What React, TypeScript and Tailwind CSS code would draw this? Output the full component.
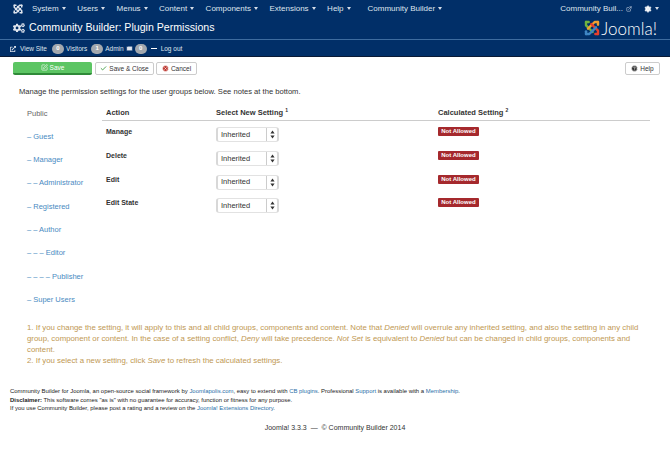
import { Check, CircleHelp, CircleX, ExternalLink, Mail, SquarePen, Settings } from "lucide-react";
import { FaCogs, FaExternalLinkAlt } from "react-icons/fa";

const menus = ["System", "Users", "Menus", "Content", "Components", "Extensions", "Help"];
const groups = [
  "– Guest",
  "– Manager",
  "– – Administrator",
  "– Registered",
  "– – Author",
  "– – – Editor",
  "– – – – Publisher",
  "– Super Users",
];
const actions = ["Manage", "Delete", "Edit", "Edit State"];

function Caret() {
  return <span className="ml-[3px] inline-block h-0 w-0 border-x-[2.5px] border-t-[3px] border-x-transparent border-t-[#d5dde8] align-middle" />;
}

// four hooked arms, same shape for the nav glyph and the coloured logo
function JoomlaMark({ size, tile }: { size: number; tile?: boolean }) {
  const colors = tile ? ["#6fb33f", "#f0a030", "#e8402a", "#3f86c4"] : ["#dfe5ee", "#dfe5ee", "#dfe5ee", "#dfe5ee"];
  return (
    <svg width={size} height={size} viewBox="0 0 24 24" fill="none" strokeWidth="3.6" strokeLinecap="round" strokeLinejoin="round">
      <path d="M3 3 V8 L13 18" stroke={colors[0]} />
      <path d="M3 3 H7" stroke={colors[0]} />
      <path d="M21 3 H16 L6 13" stroke={colors[1]} />
      <path d="M21 3 V7" stroke={colors[1]} />
      <path d="M21 21 V16 L11 6" stroke={colors[2]} />
      <path d="M21 21 H17" stroke={colors[2]} />
      <path d="M3 21 H8 L18 11" stroke={colors[3]} />
      <path d="M3 21 V17" stroke={colors[3]} />
    </svg>
  );
}

function Badge({ n }: { n: number }) {
  return <span className="flex h-[10px] w-[12px] items-center justify-center rounded-full bg-[#a3a8ae] text-[6px] font-bold text-white">{n}</span>;
}

function UpDown() {
  return (
    <svg width="5" height="9" viewBox="0 0 5 9" fill="#333">
      <path d="M2.5 0.5 L4.6 3.6 H0.4 Z" />
      <path d="M2.5 8.5 L4.6 5.4 H0.4 Z" />
    </svg>
  );
}

export default function App() {
  return (
    <div className="min-h-[462px] w-[670px] bg-white font-['Liberation_Sans',Arial,sans-serif] text-[#333]">
      <header className="bg-[#012f68] text-[#dfe5ee]">
        <nav className="flex h-[17px] items-center text-[8px]">
          <span className="ml-[13px] mr-[9px]">
            <JoomlaMark size={10} />
          </span>
          <div className="flex gap-[11.5px]">
            {menus.map((m) => (
              <span key={m}>
                {m}
                <Caret />
              </span>
            ))}
          </div>
          <span className="ml-[17px]">
            Community Builder
            <Caret />
          </span>
          <span className="ml-auto flex items-center gap-[3px]">
            Community Buil...
            <ExternalLink size={6} />
          </span>
          <span className="ml-[12px] mr-[11px] flex items-center">
            <Settings size={8} fill="#fff" />
            <Caret />
          </span>
        </nav>
        <div className="flex h-[23px] items-center border-b border-[#3e6c9f] pl-[13px] pr-[13px]">
          <FaCogs size={12} className="mr-[4px]" />
          <h1 className="text-[10.6px] font-normal text-white">Community Builder: Plugin Permissions</h1>
          <div className="ml-auto flex items-center gap-[1px]">
            <JoomlaMark size={16} tile />
            <span className="font-['Lato',sans-serif] text-[17px] leading-none font-light text-white">Joomla!</span>
          </div>
        </div>
        <div className="flex h-[17px] items-center gap-[2px] border-b border-[#0a1a35] pt-[1px] pl-[10px] text-[6.5px]">
          <FaExternalLinkAlt size={6} className="mr-[2px]" />
          <span className="mr-[3px]">View Site</span>
          <Badge n={0} />
          <span className="mr-[2px]">Visitors</span>
          <Badge n={1} />
          <span>Admin</span>
          <Mail size={7} fill="#dfe5ee" className="text-[#012f68]" />
          <Badge n={0} />
          <span className="mx-[2px] h-[1px] w-[6px] bg-white" />
          <span>Log out</span>
        </div>
      </header>

      <div className="flex items-center px-[13px] pt-[5px] text-[6.5px]">
        <button className="flex h-[13px] w-[79px] items-center justify-center gap-[2px] rounded-[2px] border-b-2 border-[#2f8a38] bg-[#5cc563] text-white">
          <SquarePen size={7} />
          Save
        </button>
        <button className="ml-[3px] flex h-[13px] w-[59px] items-center justify-center gap-[2px] rounded-[2px] border border-[#ccc] bg-white">
          <Check size={7} strokeWidth={3} className="text-[#3c9a3f]" />
          Save &amp; Close
        </button>
        <button className="ml-[2px] flex h-[13px] w-[41px] items-center justify-center gap-[2px] rounded-[2px] border border-[#ccc] bg-white">
          <CircleX size={7} fill="#bd362f" className="text-white" />
          Cancel
        </button>
        <button className="ml-auto mr-[-3px] flex h-[13px] w-[35px] items-center justify-center gap-[2px] rounded-[2px] border border-[#ccc] bg-white">
          <CircleHelp size={7} fill="#333" className="text-white" />
          Help
        </button>
      </div>

      <p className="mt-[12px] pl-[19px] text-[7.6px] leading-[10px]">
        Manage the permission settings for the user groups below. See notes at the bottom.
      </p>

      <div className="mt-[8px] flex">
        <ul className="ml-[27px] w-[75px] pt-[3.5px] text-[7.5px] text-[#4a8bc2]">
          <li className="h-[23.3px] leading-[10px] text-[#666]">Public</li>
          {groups.map((g) => (
            <li key={g} className="h-[23.3px] leading-[10px]">
              {g}
            </li>
          ))}
        </ul>
        <div className="w-[548px]">
          <div className="flex h-[16px] items-center border-b border-[#ccc] pl-[4px] text-[7.5px] font-bold">
            <span className="w-[110px]">Action</span>
            <span className="w-[222px]">
              Select New Setting <sup className="text-[5px]">1</sup>
            </span>
            <span>
              Calculated Setting <sup className="text-[5px]">2</sup>
            </span>
          </div>
          {actions.map((a) => (
            <div key={a} className="flex h-[23.8px] pl-[4px] pt-[6px] text-[7px]">
              <span className="w-[110px] font-bold">{a}</span>
              <div className="flex h-[15px] w-[63px] items-center justify-between rounded-[3px] border-x-2 border-y border-x-[#d8d8d8] border-y-[#e2e2e2] pl-[3px] text-[7.5px]">
                Inherited
                <span className="flex h-full w-[11px] items-center justify-center border-l border-[#ccc]">
                  <UpDown />
                </span>
              </div>
              <div className="ml-[159px]">
                <span className="block h-[9px] w-[41px] rounded-[1px] bg-[#a5292d] text-center text-[6px] leading-[9px] font-bold text-white">
                  Not Allowed
                </span>
              </div>
            </div>
          ))}
        </div>
      </div>

      <div className="mt-[5px] px-[27px] text-[7.83px] leading-[10.8px] text-[#c09853]">
        <p>
          1. If you change the setting, it will apply to this and all child groups, components and content. Note that <em>Denied</em> will overrule any inherited setting, and also the setting in any child group, component or content. In the case of a setting conflict, <em>Deny</em> will take precedence. <em>Not Set</em> is equivalent to <em>Denied</em> but can be changed in child groups, components and content.
        </p>
        <p>
          2. If you select a new setting, click <em>Save</em> to refresh the calculated settings.
        </p>
      </div>

      <div className="mt-[21px] pl-[10px] text-[5.93px] leading-[8.4px] text-[#222]">
        <p>
          Community Builder for Joomla, an open-source social framework by <a className="text-[#2b6fa8]">Joomlapolis.com</a>, easy to extend with <a className="text-[#2b6fa8]">CB plugins</a>. Professional <a className="text-[#2b6fa8]">Support</a> is available with a <a className="text-[#2b6fa8]">Membership</a>.
        </p>
        <p>
          <strong>Disclaimer:</strong> This software comes "as is" with no guarantee for accuracy, function or fitness for any purpose.
        </p>
        <p>
          If you use Community Builder, please post a rating and a review on the <a className="text-[#2b6fa8]">Joomla! Extensions Directory</a>.
        </p>
      </div>

      <p className="mt-[10px] text-center text-[7px] leading-[10px]">Joomla! 3.3.3 &nbsp;—&nbsp; © Community Builder 2014</p>
    </div>
  );
}
